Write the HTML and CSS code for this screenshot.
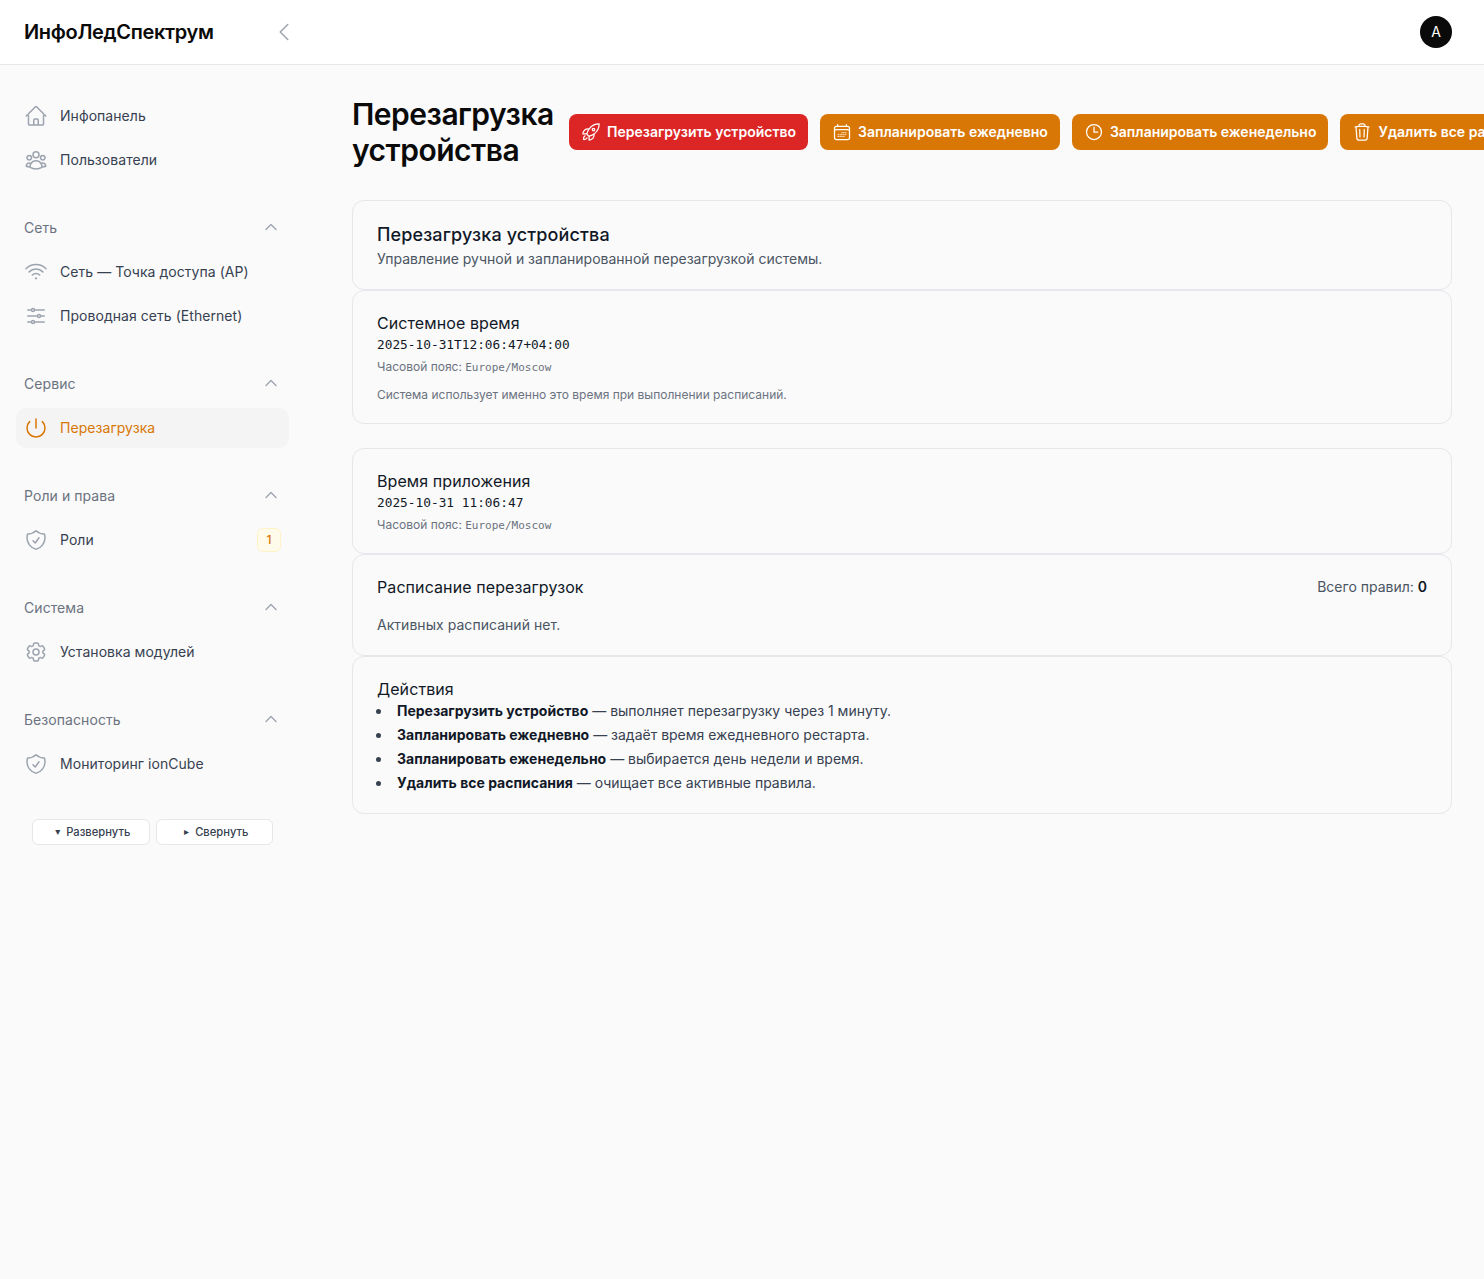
FILE: index.html
```html
<!DOCTYPE html>
<html lang="ru">
<head>
<meta charset="utf-8">
<title>Перезагрузка устройства</title>
<link rel="stylesheet" href="styles.css">
</head>
<body>
<svg class="sprite" width="0" height="0" aria-hidden="true">
  <symbol id="i-home" viewBox="0 0 24 24"><path d="m2.25 12 8.954-8.955c.44-.439 1.152-.439 1.591 0L21.75 12M4.5 9.75v10.125c0 .621.504 1.125 1.125 1.125H9.75v-4.875c0-.621.504-1.125 1.125-1.125h2.25c.621 0 1.125.504 1.125 1.125V21h4.125c.621 0 1.125-.504 1.125-1.125V9.75M8.25 21h8.25"/></symbol>
  <symbol id="i-users" viewBox="0 0 24 24"><path d="M18 18.72a9.094 9.094 0 0 0 3.741-.479 3 3 0 0 0-4.682-2.72m.94 3.198.001.031c0 .225-.012.447-.037.666A11.944 11.944 0 0 1 12 21c-2.17 0-4.207-.576-5.963-1.584A6.062 6.062 0 0 1 6 18.719m12 0a5.971 5.971 0 0 0-.941-3.197m0 0A5.995 5.995 0 0 0 12 12.75a5.995 5.995 0 0 0-5.058 2.772m0 0a3 3 0 0 0-4.681 2.72 8.986 8.986 0 0 0 3.74.477m.94-3.197a5.971 5.971 0 0 0-.94 3.197M15 6.75a3 3 0 1 1-6 0 3 3 0 0 1 6 0Zm6 3a2.25 2.25 0 1 1-4.5 0 2.25 2.25 0 0 1 4.5 0Zm-13.5 0a2.25 2.25 0 1 1-4.5 0 2.25 2.25 0 0 1 4.5 0Z"/></symbol>
  <symbol id="i-wifi" viewBox="0 0 24 24"><path d="M8.288 15.038a5.25 5.25 0 0 1 7.424 0M5.106 11.856c3.807-3.808 9.98-3.808 13.788 0M1.924 8.674c5.565-5.565 14.587-5.565 20.152 0M12.53 18.22l-.53.53-.53-.53a.75.75 0 0 1 1.06 0Z"/></symbol>
  <symbol id="i-sliders" viewBox="0 0 24 24"><path d="M10.5 6h9.75M10.5 6a1.5 1.5 0 1 1-3 0m3 0a1.5 1.5 0 1 0-3 0M3.75 6H7.5m3 12h9.75m-9.75 0a1.5 1.5 0 0 1-3 0m3 0a1.5 1.5 0 0 0-3 0m-3.75 0H7.5m9-6h3.75m-3.75 0a1.5 1.5 0 0 1-3 0m3 0a1.5 1.5 0 0 0-3 0m-9.75 0h9.75"/></symbol>
  <symbol id="i-power" viewBox="0 0 24 24"><path d="M5.636 5.636a9 9 0 1 0 12.728 0M12 3v9"/></symbol>
  <symbol id="i-shield" viewBox="0 0 24 24"><path d="M9 12.75 11.25 15 15 9.75m-3-7.036A11.959 11.959 0 0 1 3.598 6 11.99 11.99 0 0 0 3 9.749c0 5.592 3.824 10.29 9 11.623 5.176-1.332 9-6.03 9-11.622 0-1.31-.21-2.571-.598-3.751h-.152c-3.196 0-6.1-1.248-8.25-3.285Z"/></symbol>
  <symbol id="i-cog" viewBox="0 0 24 24"><path d="M9.594 3.94c.09-.542.56-.94 1.11-.94h2.593c.55 0 1.02.398 1.11.94l.213 1.281c.063.374.313.686.645.87.074.04.147.083.22.127.325.196.72.257 1.075.124l1.217-.456a1.125 1.125 0 0 1 1.37.49l1.296 2.247a1.125 1.125 0 0 1-.26 1.431l-1.003.827c-.293.241-.438.613-.43.992a7.723 7.723 0 0 1 0 .255c-.008.378.137.75.43.991l1.004.827c.424.35.534.955.26 1.43l-1.298 2.247a1.125 1.125 0 0 1-1.369.491l-1.217-.456c-.355-.133-.75-.072-1.076.124a6.47 6.47 0 0 1-.22.128c-.331.183-.581.495-.644.869l-.213 1.281c-.09.543-.56.94-1.11.94h-2.594c-.55 0-1.019-.398-1.11-.94l-.213-1.281c-.062-.374-.312-.686-.644-.87a6.52 6.52 0 0 1-.22-.127c-.325-.196-.72-.257-1.076-.124l-1.217.456a1.125 1.125 0 0 1-1.369-.49l-1.297-2.247a1.125 1.125 0 0 1 .26-1.431l1.004-.827c.292-.24.437-.613.43-.991a6.932 6.932 0 0 1 0-.255c.007-.38-.138-.751-.43-.992l-1.004-.827a1.125 1.125 0 0 1-.26-1.43l1.297-2.247a1.125 1.125 0 0 1 1.37-.491l1.216.456c.356.133.751.072 1.076-.124.072-.044.146-.086.22-.128.332-.183.582-.495.644-.869l.214-1.28Z"/><path d="M15 12a3 3 0 1 1-6 0 3 3 0 0 1 6 0Z"/></symbol>
  <symbol id="i-rocket" viewBox="0 0 24 24"><path d="M15.59 14.37a6 6 0 0 1-5.84 7.38v-4.8m5.84-2.58a14.98 14.98 0 0 0 6.16-12.12A14.98 14.98 0 0 0 9.631 8.41m5.96 5.96a14.926 14.926 0 0 1-5.841 2.58m-.119-8.54a6 6 0 0 0-7.381 5.84h4.8m2.581-5.84a14.927 14.927 0 0 0-2.58 5.84m2.699 2.7c-.103.021-.207.041-.311.06a15.09 15.09 0 0 1-2.448-2.448 14.9 14.9 0 0 1 .06-.312m-2.24 2.39a4.493 4.493 0 0 0-1.757 4.306 4.493 4.493 0 0 0 4.306-1.758M16.5 9a1.5 1.5 0 1 1-3 0 1.5 1.5 0 0 1 3 0Z"/></symbol>
  <symbol id="i-calendar" viewBox="0 0 24 24"><path d="M6.75 3v2.25M17.25 3v2.25M3 18.75V7.5a2.25 2.25 0 0 1 2.25-2.25h13.5A2.25 2.25 0 0 1 21 7.5v11.25m-18 0A2.25 2.25 0 0 0 5.25 21h13.5A2.25 2.25 0 0 0 21 18.75m-18 0v-7.5A2.25 2.25 0 0 1 5.25 9h13.5A2.25 2.25 0 0 1 21 11.25v7.5m-9-6h.008v.008H12v-.008ZM12 15h.008v.008H12V15Zm0 2.25h.008v.008H12v-.008ZM9.75 15h.008v.008H9.75V15Zm0 2.25h.008v.008H9.75v-.008ZM7.5 15h.008v.008H7.5V15Zm0 2.25h.008v.008H7.5v-.008Zm6.75-4.5h.008v.008h-.008v-.008Zm0 2.25h.008v.008h-.008V15Zm0 2.25h.008v.008h-.008v-.008Zm2.25-4.5h.008v.008H16.5v-.008Zm0 2.25h.008v.008H16.5V15Z"/></symbol>
  <symbol id="i-clock" viewBox="0 0 24 24"><path d="M12 6v6h4.5m4.5 0a9 9 0 1 1-18 0 9 9 0 0 1 18 0Z"/></symbol>
  <symbol id="i-trash" viewBox="0 0 24 24"><path d="m14.74 9-.346 9m-4.788 0L9.26 9m9.968-3.21c.342.052.682.107 1.022.166m-1.022-.165L18.16 19.673a2.25 2.25 0 0 1-2.244 2.077H8.084a2.25 2.25 0 0 1-2.244-2.077L4.772 5.79m14.456 0a48.108 48.108 0 0 0-3.478-.397m-12 .562c.34-.059.68-.114 1.022-.165m0 0a48.11 48.11 0 0 1 3.478-.397m7.5 0v-.916c0-1.18-.91-2.164-2.09-2.201a51.964 51.964 0 0 0-3.32 0c-1.18.037-2.09 1.022-2.09 2.201v.916m7.5 0a48.667 48.667 0 0 0-7.5 0"/></symbol>
  <symbol id="i-up" viewBox="0 0 24 24"><path d="m4.5 15.75 7.5-7.5 7.5 7.5"/></symbol>
  <symbol id="i-left" viewBox="0 0 24 24"><path d="M15.75 19.5 8.25 12l7.5-7.5"/></symbol>
</svg>

<header class="topbar">
  <div class="brand">
    <span class="logo">ИнфоЛедСпектрум</span>
    <button class="collapse" type="button" aria-label="Свернуть"><svg class="ico-collapse"><use href="#i-left"/></svg></button>
  </div>
  <div class="avatar">A</div>
</header>

<div class="layout">
  <aside class="sidebar">
    <nav class="nav">
      <div class="group">
        <a class="item"><svg class="ico"><use href="#i-home"/></svg><span>Инфопанель</span></a>
        <a class="item"><svg class="ico"><use href="#i-users"/></svg><span>Пользователи</span></a>
      </div>
      <div class="group">
        <div class="group-label"><span>Сеть</span><svg class="ico-up"><use href="#i-up"/></svg></div>
        <a class="item"><svg class="ico"><use href="#i-wifi"/></svg><span>Сеть — Точка доступа (AP)</span></a>
        <a class="item"><svg class="ico"><use href="#i-sliders"/></svg><span>Проводная сеть (Ethernet)</span></a>
      </div>
      <div class="group">
        <div class="group-label"><span>Сервис</span><svg class="ico-up"><use href="#i-up"/></svg></div>
        <a class="item active"><svg class="ico"><use href="#i-power"/></svg><span>Перезагрузка</span></a>
      </div>
      <div class="group">
        <div class="group-label"><span>Роли и права</span><svg class="ico-up"><use href="#i-up"/></svg></div>
        <a class="item"><svg class="ico"><use href="#i-shield"/></svg><span>Роли</span><b class="badge">1</b></a>
      </div>
      <div class="group">
        <div class="group-label"><span>Система</span><svg class="ico-up"><use href="#i-up"/></svg></div>
        <a class="item"><svg class="ico"><use href="#i-cog"/></svg><span>Установка модулей</span></a>
      </div>
      <div class="group">
        <div class="group-label"><span>Безопасность</span><svg class="ico-up"><use href="#i-up"/></svg></div>
        <a class="item"><svg class="ico"><use href="#i-shield"/></svg><span>Мониторинг ionCube</span></a>
      </div>
    </nav>
    <div class="tree-actions">
      <button class="tree-btn" type="button"><span class="tri">▾</span>Развернуть</button>
      <button class="tree-btn" type="button"><span class="tri">▸</span>Свернуть</button>
    </div>
  </aside>

  <main class="main">
    <div class="page-head">
      <h1 class="page-title">Перезагрузка устройства</h1>
      <div class="actions">
        <button class="btn btn-red" type="button"><svg class="btn-ico"><use href="#i-rocket"/></svg>Перезагрузить устройство</button>
        <button class="btn btn-orange" type="button"><svg class="btn-ico"><use href="#i-calendar"/></svg>Запланировать ежедневно</button>
        <button class="btn btn-orange" type="button"><svg class="btn-ico"><use href="#i-clock"/></svg>Запланировать еженедельно</button>
        <button class="btn btn-orange" type="button"><svg class="btn-ico"><use href="#i-trash"/></svg>Удалить все расписания</button>
      </div>
    </div>

    <section class="card">
      <h2 class="card-title-lg">Перезагрузка устройства</h2>
      <p class="card-sub">Управление ручной и запланированной перезагрузкой системы.</p>
    </section>
    <section class="card card-spaced">
      <h3 class="card-title">Системное время</h3>
      <div class="mono">2025-10-31T12:06:47+04:00</div>
      <div class="tz">Часовой пояс: <code>Europe/Moscow</code></div>
      <p class="note">Система использует именно это время при выполнении расписаний.</p>
    </section>
    <section class="card">
      <h3 class="card-title">Время приложения</h3>
      <div class="mono">2025-10-31 11:06:47</div>
      <div class="tz">Часовой пояс: <code>Europe/Moscow</code></div>
    </section>
    <section class="card">
      <div class="card-row">
        <h3 class="card-title">Расписание перезагрузок</h3>
        <div class="count">Всего правил: <strong>0</strong></div>
      </div>
      <p class="empty">Активных расписаний нет.</p>
    </section>
    <section class="card">
      <h3 class="card-title">Действия</h3>
      <ul class="list">
        <li><strong>Перезагрузить устройство</strong> — выполняет перезагрузку через 1 минуту.</li>
        <li><strong>Запланировать ежедневно</strong> — задаёт время ежедневного рестарта.</li>
        <li><strong>Запланировать еженедельно</strong> — выбирается день недели и время.</li>
        <li><strong>Удалить все расписания</strong> — очищает все активные правила.</li>
      </ul>
    </section>
  </main>
</div>
</body>
</html>
```
FILE: styles.css
```css
* { box-sizing: border-box; }
html, body { margin: 0; padding: 0; }
html { overflow-x: hidden; }
body {
  min-height: 1279px;
  width: 1484px;
  overflow-x: hidden;
  background: #fafafa;
  color: #111827;
  font-family: Inter, "Liberation Sans", sans-serif;
  font-size: 14px;
  line-height: 20px;
}
.sprite { display: block; height: 0; width: 0; overflow: hidden; }
svg { fill: none; stroke: currentColor; stroke-width: 1.5; stroke-linecap: round; stroke-linejoin: round; flex: none; }

.topbar {
  height: 65px;
  background: #fff;
  border-bottom: 1px solid #e5e7eb;
  display: flex;
  align-items: center;
  justify-content: space-between;
  padding: 0 32px 0 24px;
}
.brand { display: flex; align-items: center; }
.logo { font-size: 20px; line-height: 28px; font-weight: 600; letter-spacing: -0.33px; color: #0a0a0a; width: 248px; }
.collapse { border: 0; background: none; padding: 0; color: #9ca3af; display: flex; }
.ico-collapse { width: 24px; height: 24px; }
.avatar {
  width: 32px; height: 32px; border-radius: 50%;
  background: #0a0a0a; color: #fff;
  display: flex; align-items: center; justify-content: center;
  font-size: 14px; font-weight: 400;
}

.layout { display: flex; }
.sidebar { width: 320px; flex: none; padding: 31px 31px 0 16px; }
.nav { display: flex; flex-direction: column; gap: 28px; }
.group { display: flex; flex-direction: column; gap: 4px; }
.group-label {
  height: 40px; display: flex; align-items: center; justify-content: space-between;
  padding: 0 9.7px 0 8px; color: #6b7280; letter-spacing: 0.07px;
}
.ico-up { width: 16px; height: 16px; color: #9ca3af; stroke-width: 2; margin-bottom: 1.4px; }
.item {
  height: 40px; display: flex; align-items: center; gap: 12px;
  padding: 0 8px; border-radius: 10px; color: #374151; letter-spacing: 0.05px;
}
.item .ico { width: 24px; height: 24px; color: #9ca3af; }
.item.active { background: #f4f4f5; color: #d97706; }
.item.active .ico { color: #d97706; }
.badge {
  margin-left: auto; width: 24px; height: 24px; border-radius: 6px;
  display: flex; align-items: center; justify-content: center;
  background: #fffbeb; border: 1px solid #fef3c7; color: #d97706;
  font-size: 12px; font-weight: 500;
}
.tree-actions { display: flex; gap: 6px; padding: 0 16px; margin-top: 35px; }
.tree-btn {
  flex: 1 1 0; height: 26px; background: #fff; border: 1px solid #e5e7eb; border-radius: 6px;
  font: 500 11.2px/16px Inter, "Liberation Sans", sans-serif; color: #374151;
  display: flex; align-items: center; justify-content: center; gap: 6px; padding: 0 0 0 4px;
}
.tri { font-size: 10px; font-family: "DejaVu Sans", sans-serif; }

.main { flex: 1; min-width: 0; padding: 31px 32px 32px 32px; }
.page-head { display: flex; align-items: center; gap: 16px; margin-bottom: 32px; }
.page-title { margin: 0; font-size: 30px; line-height: 36px; font-weight: 600; letter-spacing: -0.5px; color: #0a0a0a; flex: none; width: 201px; }
.actions { display: flex; gap: 12px; flex: none; }
.btn {
  height: 36px; display: flex; align-items: center; gap: 6px; padding: 0 12px;
  border: 0; border-radius: 8px; color: #fff; white-space: nowrap;
  font: 600 14px/20px Inter, "Liberation Sans", sans-serif;
}
.btn-red { background: #dc2626; }
.btn-orange { background: #d97706; }
.btn-ico { width: 20px; height: 20px; }

.card { background: #fafafa; border: 1px solid #e5e7eb; border-radius: 12px; padding: 20px 24px; }
.card-spaced { margin-bottom: 24px; }
.card-title-lg { margin: 0; font-size: 18px; line-height: 28px; font-weight: 500; letter-spacing: 0.13px; color: #111827; }
.card-sub { margin: 0; color: #4b5563; }
.card-title { margin: 0; font-size: 16px; line-height: 24px; font-weight: 400; letter-spacing: 0.09px; color: #111827; }
.mono, .tz code { font-family: "DejaVu Sans Mono", monospace; }
.mono { font-size: 12.8px; line-height: 19.2px; color: #111827; }
.tz { margin-top: 4.8px; font-size: 12px; line-height: 16px; color: #6b7280; }
.tz code { font-size: 11px; line-height: 0; color: #6b7280; }
.note { margin: 12px 0 0; font-size: 12px; line-height: 16px; color: #6b7280; }
.card-row { display: flex; justify-content: space-between; align-items: center; }
.count { color: #4b5563; }
.count strong { font-weight: 600; color: #111827; }
.empty { margin: 16px 0 0; color: #4b5563; letter-spacing: 0.04px; }
.list { margin: 0; padding-left: 15px; color: #374151; display: flex; flex-direction: column; gap: 4px; list-style: disc; }
.list li { padding-left: 5px; }
.list strong { font-weight: 700; color: #111827; }
```
